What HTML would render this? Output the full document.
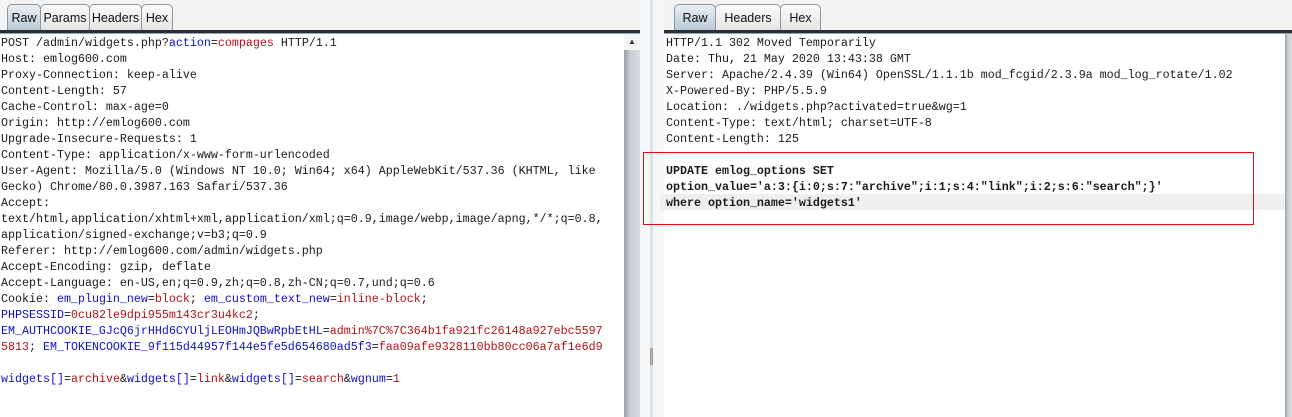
<!DOCTYPE html>
<html><head><style>
body{margin:0;width:1292px;height:417px;background:#fff;position:relative;overflow:hidden;font-family:"Liberation Mono","Noto Sans CJK SC",monospace;}
.top{position:absolute;top:0;height:31px;background:#f3f3f3;}
.hline{position:absolute;top:30px;height:3px;background:#2a2f35;border-bottom:1px solid #9aa4ad;}
.tab{position:absolute;top:4px;height:26px;border:1px solid #8e979e;border-bottom:none;border-radius:5px 5px 0 0;background:linear-gradient(#fafafa,#e6e6e6);font:12.5px "Liberation Sans",sans-serif;color:#111;text-align:center;line-height:26px;box-sizing:border-box;}
.tab.sel{background:linear-gradient(#e9f0f5,#b8c9d6);}
.txt{position:absolute;top:35px;font-size:11.67px;line-height:16px;white-space:pre;color:#1a1a1a;}
.b{color:#1010c8}.r{color:#b31414}
.sb{position:absolute;width:16px;top:34px;bottom:0;background:linear-gradient(90deg,#9aa0a6,#c9ced4 40%,#d9dde2);}
.arr{position:absolute;left:0;top:0;width:16px;height:16px;background:#f4f4f4;font:8px sans-serif;text-align:center;line-height:16px;color:#333;}
</style></head><body>
<div class="top" style="left:0;width:640px"></div>
<div class="top" style="left:664px;width:628px"></div>
<div class="hline" style="left:0;width:640px"></div>
<div class="hline" style="left:660px;width:632px"></div>
<div class="tab sel" style="left:7px;width:34px">Raw</div>
<div class="tab" style="left:40px;width:50px">Params</div>
<div class="tab" style="left:89px;width:53px">Headers</div>
<div class="tab" style="left:141px;width:32px">Hex</div>
<div class="tab sel" style="left:674px;width:42px">Raw</div>
<div class="tab" style="left:715px;width:66px">Headers</div>
<div class="tab" style="left:780px;width:41px">Hex</div>

<div style="position:absolute;left:640px;top:0;width:24px;height:417px;background:#f6f7f8"></div>
<div style="position:absolute;left:650px;top:0;width:3px;height:417px;background:#dfe2e5"></div>
<div style="position:absolute;left:650px;top:348px;width:3px;height:17px;background:#b8bcc0;border:1px solid #999;box-sizing:border-box"></div>

<div class="sb" style="left:624px"><div class="arr">▲</div></div>
<div class="sb" style="left:1285px;width:7px"></div>

<div class="txt" style="left:1px">POST /admin/widgets.php?<span class="b">action</span>=<span class="r">compages</span> HTTP/1.1
Host: emlog600.com
Proxy-Connection: keep-alive
Content-Length: 57
Cache-Control: max-age=0
Origin: http://emlog600.com
Upgrade-Insecure-Requests: 1
Content-Type: application/x-www-form-urlencoded
User-Agent: Mozilla/5.0 (Windows NT 10.0; Win64; x64) AppleWebKit/537.36 (KHTML, like
Gecko) Chrome/80.0.3987.163 Safari/537.36
Accept:
text/html,application/xhtml+xml,application/xml;q=0.9,image/webp,image/apng,*/*;q=0.8,
application/signed-exchange;v=b3;q=0.9
Referer: http://emlog600.com/admin/widgets.php
Accept-Encoding: gzip, deflate
Accept-Language: en-US,en;q=0.9,zh;q=0.8,zh-CN;q=0.7,und;q=0.6
Cookie: <span class="b">em_plugin_new</span>=<span class="r">block</span>; <span class="b">em_custom_text_new</span>=<span class="r">inline-block</span>;
<span class="b">PHPSESSID</span>=<span class="r">0cu82le9dpi955m143cr3u4kc2</span>;
<span class="b">EM_AUTHCOOKIE_GJcQ6jrHHd6CYUljLEOHmJQBwRpbEtHL</span>=<span class="r">admin%7C%7C364b1fa921fc26148a927ebc5597</span>
<span class="r">5813</span>; <span class="b">EM_TOKENCOOKIE_9f115d44957f144e5fe5d654680ad5f3</span>=<span class="r">faa09afe9328110bb80cc06a7af1e6d9</span>

<span class="b">widgets[]</span>=<span class="r">archive</span>&amp;<span class="b">widgets[]</span>=<span class="r">link</span>&amp;<span class="b">widgets[]</span>=<span class="r">search</span>&amp;<span class="b">wgnum</span>=<span class="r">1</span></div>

<div style="position:absolute;left:660px;top:194px;width:625px;height:16px;background:#efefef"></div>
<div class="txt" style="left:666px">HTTP/1.1 302 Moved Temporarily
Date: Thu, 21 May 2020 13:43:38 GMT
Server: Apache/2.4.39 (Win64) OpenSSL/1.1.1b mod_fcgid/2.3.9a mod_log_rotate/1.02
X-Powered-By: PHP/5.5.9
Location: ./widgets.php?activated=true&amp;wg=1
Content-Type: text/html; charset=UTF-8
Content-Length: 125

<b>UPDATE emlog_options SET
option_value='a:3:{i:0;s:7:"archive";i:1;s:4:"link";i:2;s:6:"search";}'
where option_name='widgets1'</b></div>
<div style="position:absolute;left:643px;top:152px;width:611px;height:73px;border:1px solid #e01010;box-sizing:border-box"></div>
</body></html>
